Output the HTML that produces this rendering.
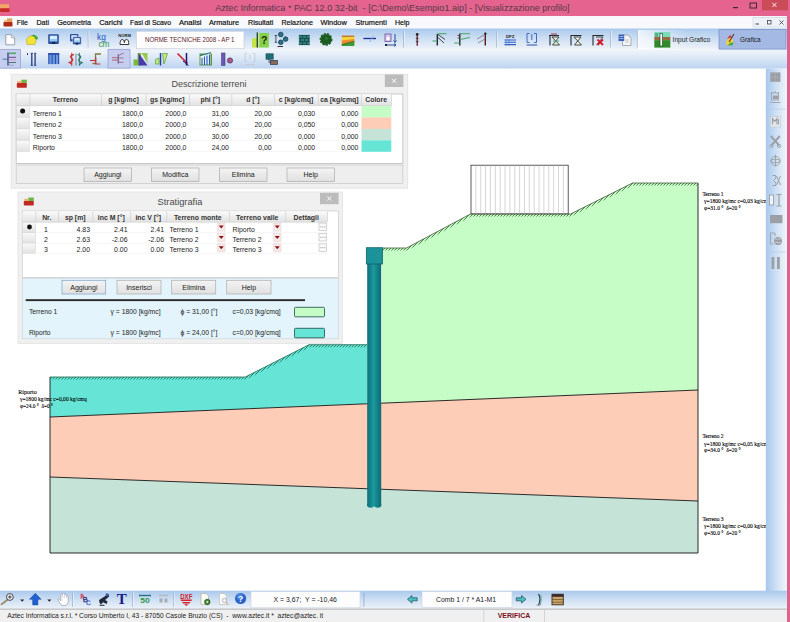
<!DOCTYPE html><html><head><meta charset="utf-8"><title>Aztec Informatica * PAC 12.0</title>
<style>html,body{margin:0;padding:0;background:#fff;overflow:hidden}svg{display:block}text{font-family:"Liberation Sans", sans-serif}.s{font-family:"Liberation Serif", serif}</style></head><body>
<svg width="790" height="622" viewBox="0 0 790 622">
<defs>
<linearGradient id="tb" x1="0" y1="0" x2="0" y2="1"><stop offset="0" stop-color="#a9c9ec"/><stop offset="0.5" stop-color="#cfe0f3"/><stop offset="1" stop-color="#eef3fa"/></linearGradient>
<linearGradient id="tb2" x1="0" y1="0" x2="0" y2="1"><stop offset="0" stop-color="#f1f5fb"/><stop offset="0.45" stop-color="#dce8f7"/><stop offset="1" stop-color="#bcd3f0"/></linearGradient>
<linearGradient id="rb" x1="0" y1="0" x2="1" y2="0"><stop offset="0" stop-color="#a6c8ec"/><stop offset="0.5" stop-color="#cfe0f4"/><stop offset="1" stop-color="#f1f5fb"/></linearGradient>
<linearGradient id="pile" x1="0" y1="0" x2="1" y2="0"><stop offset="0" stop-color="#0d6e76"/><stop offset="0.45" stop-color="#1a9aa0"/><stop offset="1" stop-color="#0c6a72"/></linearGradient>
<pattern id="h1" width="3" height="3" patternUnits="userSpaceOnUse"><path d="M-0.5 3.5L3.5 -0.5M-1.5 1.5L1.5 -1.5M1.5 4.5L4.5 1.5" stroke="#1f6a50" stroke-width="0.8"/></pattern>
<pattern id="h2" width="3" height="3" patternUnits="userSpaceOnUse"><path d="M-0.5 3.5L3.5 -0.5M-1.5 1.5L1.5 -1.5M1.5 4.5L4.5 1.5" stroke="#3f5f3a" stroke-width="0.8"/></pattern>
<linearGradient id="hdr" x1="0" y1="0" x2="0" y2="1"><stop offset="0" stop-color="#fafafa"/><stop offset="1" stop-color="#e2e2e2"/></linearGradient>
<linearGradient id="btn" x1="0" y1="0" x2="0" y2="1"><stop offset="0" stop-color="#f4f4f4"/><stop offset="1" stop-color="#e0e0e0"/></linearGradient>
</defs>
<rect width="790" height="622" fill="#fff"/>
<rect x="0" y="0" width="790" height="16.2" fill="#e5648f"/>
<rect x="786.8" y="16" width="3.2" height="606" fill="#da648c"/>
<rect x="762" y="0" width="26" height="10.3" fill="#cb4c58"/>
<text x="215.2" y="11" font-size="9.6" fill="#553a48" textLength="354.4" lengthAdjust="spacingAndGlyphs" xml:space="preserve">Aztec Informatica * PAC 12.0 32-bit  - [C:\Demo\Esempio1.aip] - [Visualizzazione profilo]</text>
<rect x="733" y="7" width="5" height="1.2" fill="#3a2a33"/>
<rect x="750" y="3" width="6.5" height="5" fill="none" stroke="#3a2a33" stroke-width="1"/>
<path d="M772.3 2.8l4.2 4.2m0 -4.2l-4.2 4.2" stroke="#fff" stroke-width="0.9" fill="none"/>
<rect x="0" y="4.2" width="9" height="4.400" fill="#f0a868"/><rect x="0" y="8.2" width="9.600" height="3.700" rx="0.800" fill="#c82a2a"/>
<rect x="0" y="16.2" width="786.8" height="12.3" fill="#f8f9fc"/>
<rect x="7" y="18.400" width="5.200" height="4" fill="#e0a060"/><rect x="3.800" y="20" width="3.600" height="2.500" fill="#f0c080"/><rect x="3.500" y="22" width="9" height="4.500" rx="0.800" fill="#b02a18"/>
<text x="16.7" y="25.3" font-size="7.7" fill="#0a0a0a" stroke="#0a0a0a" stroke-width="0.18" textLength="11.1" lengthAdjust="spacingAndGlyphs">File</text>
<text x="36.5" y="25.3" font-size="7.7" fill="#0a0a0a" stroke="#0a0a0a" stroke-width="0.18" textLength="12.5" lengthAdjust="spacingAndGlyphs">Dati</text>
<text x="57.2" y="25.3" font-size="7.7" fill="#0a0a0a" stroke="#0a0a0a" stroke-width="0.18" textLength="33.8" lengthAdjust="spacingAndGlyphs">Geometria</text>
<text x="99.2" y="25.3" font-size="7.7" fill="#0a0a0a" stroke="#0a0a0a" stroke-width="0.18" textLength="23.3" lengthAdjust="spacingAndGlyphs">Carichi</text>
<text x="130" y="25.3" font-size="7.7" fill="#0a0a0a" stroke="#0a0a0a" stroke-width="0.18" textLength="41" lengthAdjust="spacingAndGlyphs">Fasi di Scavo</text>
<text x="179" y="25.3" font-size="7.7" fill="#0a0a0a" stroke="#0a0a0a" stroke-width="0.18" textLength="22.5" lengthAdjust="spacingAndGlyphs">Analisi</text>
<text x="209" y="25.3" font-size="7.7" fill="#0a0a0a" stroke="#0a0a0a" stroke-width="0.18" textLength="30" lengthAdjust="spacingAndGlyphs">Armature</text>
<text x="248" y="25.3" font-size="7.7" fill="#0a0a0a" stroke="#0a0a0a" stroke-width="0.18" textLength="25.4" lengthAdjust="spacingAndGlyphs">Risultati</text>
<text x="281.5" y="25.3" font-size="7.7" fill="#0a0a0a" stroke="#0a0a0a" stroke-width="0.18" textLength="31.5" lengthAdjust="spacingAndGlyphs">Relazione</text>
<text x="320.5" y="25.3" font-size="7.7" fill="#0a0a0a" stroke="#0a0a0a" stroke-width="0.18" textLength="26.3" lengthAdjust="spacingAndGlyphs">Window</text>
<text x="355.4" y="25.3" font-size="7.7" fill="#0a0a0a" stroke="#0a0a0a" stroke-width="0.18" textLength="31.4" lengthAdjust="spacingAndGlyphs">Strumenti</text>
<text x="395" y="25.3" font-size="7.7" fill="#0a0a0a" stroke="#0a0a0a" stroke-width="0.18" textLength="14.5" lengthAdjust="spacingAndGlyphs">Help</text>
<rect x="753" y="17.5" width="33" height="9.5" fill="#eef2f8" stroke="#c8d2e0" stroke-width="0.6"/>
<rect x="755.5" y="23.5" width="3.5" height="1" fill="#445"/>
<rect x="767.5" y="20.5" width="3.5" height="3.5" fill="none" stroke="#445" stroke-width="0.8"/>
<path d="M779.5 20.5l4 4m0 -4l-4 4" stroke="#445" stroke-width="0.9" fill="none"/>
<rect x="0" y="28.5" width="786.8" height="21" fill="url(#tb)"/>
<rect x="0" y="49.5" width="786.8" height="19" fill="url(#tb2)"/>
<rect x="0" y="68.3" width="786.8" height="0.6" fill="#dfe9f5"/>
<rect x="765.8" y="68.6" width="21" height="522.4" fill="url(#rb)"/>
<rect x="0" y="590.7" width="786.8" height="18.3" fill="url(#tb)"/>
<rect x="0" y="609" width="786.8" height="13" fill="#f0f0f0"/>
<rect x="0" y="608.7" width="786.8" height="0.8" fill="#a0a0a0"/>
<text x="7.2" y="618.4" font-size="7.5" fill="#222" textLength="316" lengthAdjust="spacingAndGlyphs" xml:space="preserve">Aztec Informatica s.r.l. * Corso Umberto I, 43 - 87050 Casole Bruzio (CS)  -  www.aztec.it *  aztec@aztec. it</text>
<rect x="483.5" y="610" width="0.7" height="12" fill="#c8c8c8"/><rect x="544" y="610" width="0.7" height="12" fill="#c8c8c8"/>
<text x="514" y="618.2" font-size="7" font-weight="bold" fill="#7a1020" text-anchor="middle">VERIFICA</text>
<g stroke="#151515" stroke-width="0.9" stroke-linejoin="round">
<polygon points="382,248 406.5,248 470.5,214 570.5,214 632.5,183 698,183 698,390 382,403.167" fill="#c6fcc6" stroke="none"/>
<polygon points="50,377 245.3,377 309,344.7 367,344.7 367,403.792 50,417" fill="#66e5d6" stroke="none"/>
<polygon points="50,417 698,390 698,501 50,477" fill="#fdcdb8" stroke="none"/>
<polygon points="50,477 698,501 698,553 50,553" fill="#c6e3d7" stroke="none"/>
<path d="M50 377V553H698V183" fill="none"/>
<path d="M50 417 L698 390 M50 477 L698 501" fill="none"/>
</g>
<path d="M50 377H245.3L309 344.7H367" fill="none" stroke="#1f6a50" stroke-width="0.8"/>
<path d="M50 377H245.3L309 344.7H367V347.2H309.6L245.9 379.5H50z" fill="url(#h1)"/>
<path d="M382 248H406.5L470.5 214H570.5L632.5 183H698" fill="none" stroke="#3f5f3a" stroke-width="0.8"/>
<path d="M382 248H406.5L470.5 214H570.5L632.5 183H698V185.500H633.100L571.100 216.500H471.100L407.100 250.500H382z" fill="url(#h2)"/>
<rect x="367.2" y="262" width="14" height="243.700" fill="url(#pile)"/>
<path d="M367.200 503.700v2.500q3.500 3 7 0q3.500 3 7 0v-2.500z" fill="url(#pile)"/>
<rect x="366.3" y="247.7" width="16.2" height="16.3" fill="#1c9299" stroke="#0a5a62" stroke-width="0.7"/>
<rect x="471" y="165.2" width="97.2" height="48.6" fill="#fff" stroke="#333" stroke-width="0.8"/>
<path d="M475.86 165.6V213.4M480.72 165.6V213.4M485.58 165.6V213.4M490.44 165.6V213.4M495.3 165.6V213.4M500.16 165.6V213.4M505.02 165.6V213.4M509.88 165.6V213.4M514.74 165.6V213.4M519.6 165.6V213.4M524.46 165.6V213.4M529.32 165.6V213.4M534.18 165.6V213.4M539.04 165.6V213.4M543.9 165.6V213.4M548.76 165.6V213.4M553.62 165.6V213.4M558.48 165.6V213.4M563.34 165.6V213.4" stroke="#c4c4c4" stroke-width="0.7" fill="none"/>
<clipPath id="cl"><rect x="0" y="68" width="765.8" height="523"/></clipPath><g clip-path="url(#cl)">
<text class="s" font-size="6.1" fill="#000" stroke="#000" stroke-width="0.12" lengthAdjust="spacingAndGlyphs" x="702.4" y="195.9" textLength="21.1">Terreno 1</text>
<text class="s" font-size="6.1" fill="#000" stroke="#000" stroke-width="0.12" lengthAdjust="spacingAndGlyphs" x="704.1" y="203" textLength="66.7">γ=1800 kg/mc c=0,03 kg/cmq</text>
<text class="s" font-size="6.1" fill="#000" stroke="#000" stroke-width="0.12" lengthAdjust="spacingAndGlyphs" x="704.1" y="209.8" textLength="36.7" xml:space="preserve">φ=31.0 °  δ=20 °</text>
<text class="s" font-size="6.1" fill="#000" stroke="#000" stroke-width="0.12" lengthAdjust="spacingAndGlyphs" x="702.4" y="438" textLength="21.1">Terreno 2</text>
<text class="s" font-size="6.1" fill="#000" stroke="#000" stroke-width="0.12" lengthAdjust="spacingAndGlyphs" x="704.1" y="445.5" textLength="66.7">γ=1800 kg/mc c=0,05 kg/cmq</text>
<text class="s" font-size="6.1" fill="#000" stroke="#000" stroke-width="0.12" lengthAdjust="spacingAndGlyphs" x="704.1" y="452.2" textLength="36.7" xml:space="preserve">φ=34.0 °  δ=20 °</text>
<text class="s" font-size="6.1" fill="#000" stroke="#000" stroke-width="0.12" lengthAdjust="spacingAndGlyphs" x="702.4" y="521" textLength="21.1">Terreno 3</text>
<text class="s" font-size="6.1" fill="#000" stroke="#000" stroke-width="0.12" lengthAdjust="spacingAndGlyphs" x="704.1" y="528" textLength="66.7">γ=1800 kg/mc c=0,00 kg/cmq</text>
<text class="s" font-size="6.1" fill="#000" stroke="#000" stroke-width="0.12" lengthAdjust="spacingAndGlyphs" x="704.1" y="535" textLength="36.7" xml:space="preserve">φ=30.0 °  δ=20 °</text>
<text class="s" font-size="6.1" fill="#000" stroke="#000" stroke-width="0.12" lengthAdjust="spacingAndGlyphs" x="18.3" y="393.6" textLength="18.4">Riporto</text>
<text class="s" font-size="6.1" fill="#000" stroke="#000" stroke-width="0.12" lengthAdjust="spacingAndGlyphs" x="20" y="401" textLength="66.7">γ=1800 kg/mc c=0,00 kg/cmq</text>
<text class="s" font-size="6.1" fill="#000" stroke="#000" stroke-width="0.12" lengthAdjust="spacingAndGlyphs" x="20" y="408" textLength="33" xml:space="preserve">φ=24.0 °  δ=0 °</text>
</g>
<rect x="11.2" y="74.2" width="396.5" height="114" fill="#f0f0f0" stroke="#e0e0e0" stroke-width="0.8"/>
<rect x="21.3" y="79.7" width="5.500" height="3.600" fill="#6ab84a"/><rect x="17.3" y="81" width="4.200" height="2.600" fill="#f0b070"/><rect x="16.8" y="83.1" width="10" height="4.700" rx="0.800" fill="#c02a22"/>
<text x="171.5" y="87.3" font-size="9.4" fill="#4a4a4a" textLength="75" lengthAdjust="spacingAndGlyphs">Descrizione terreni</text>
<rect x="384.8" y="74.5" width="18.6" height="12.5" fill="#bcbcbc"/>
<path d="M392.1 78.75l4 4m0 -4l-4 4" stroke="#fff" stroke-width="1" fill="none"/>
<rect x="16.2" y="94" width="386.6" height="69.5" fill="#fff" stroke="#c4c4c4" stroke-width="0.9"/>
<rect x="16.5" y="94.3" width="374.8" height="11.2" fill="url(#hdr)"/>
<rect x="29.5" y="94.3" width="0.7" height="11.2" fill="#cfcfcf"/>
<rect x="101.2" y="94.3" width="0.7" height="11.2" fill="#cfcfcf"/>
<rect x="145.7" y="94.3" width="0.7" height="11.2" fill="#cfcfcf"/>
<rect x="189" y="94.3" width="0.7" height="11.2" fill="#cfcfcf"/>
<rect x="231.5" y="94.3" width="0.7" height="11.2" fill="#cfcfcf"/>
<rect x="274.3" y="94.3" width="0.7" height="11.2" fill="#cfcfcf"/>
<rect x="317.8" y="94.3" width="0.7" height="11.2" fill="#cfcfcf"/>
<rect x="361" y="94.3" width="0.7" height="11.2" fill="#cfcfcf"/>
<rect x="391.3" y="94.3" width="0.7" height="11.2" fill="#cfcfcf"/>
<rect x="16.5" y="105.3" width="374.8" height="0.7" fill="#cfcfcf"/>
<text x="65.35" y="102.2" font-size="6.9" font-weight="bold" text-anchor="middle" fill="#333">Terreno</text>
<text x="123.45" y="102.2" font-size="6.9" font-weight="bold" text-anchor="middle" fill="#333">g [kg/mc]</text>
<text x="167.35" y="102.2" font-size="6.9" font-weight="bold" text-anchor="middle" fill="#333">gs [kg/mc]</text>
<text x="210.25" y="102.2" font-size="6.9" font-weight="bold" text-anchor="middle" fill="#333">phi [°]</text>
<text x="252.9" y="102.2" font-size="6.9" font-weight="bold" text-anchor="middle" fill="#333">d [°]</text>
<text x="296.05" y="102.2" font-size="6.9" font-weight="bold" text-anchor="middle" fill="#333">c [kg/cmq]</text>
<text x="339.4" y="102.2" font-size="6.9" font-weight="bold" text-anchor="middle" fill="#333">ca [kg/cmq]</text>
<text x="376.15" y="102.2" font-size="6.9" font-weight="bold" text-anchor="middle" fill="#333">Colore</text>
<rect x="16.5" y="106" width="13" height="11.2" fill="url(#hdr)" stroke="#d4d4d4" stroke-width="0.5"/>
<rect x="29.5" y="117.3" width="331.5" height="0.5" fill="#ececec"/>
<text x="32.7" y="115.9" font-size="6.9" fill="#222">Terreno 1</text>
<text x="143.1" y="115.9" font-size="6.9" text-anchor="end" fill="#222">1800,0</text>
<text x="186.4" y="115.9" font-size="6.9" text-anchor="end" fill="#222">2000,0</text>
<text x="228.9" y="115.9" font-size="6.9" text-anchor="end" fill="#222">31,00</text>
<text x="271.7" y="115.9" font-size="6.9" text-anchor="end" fill="#222">20,00</text>
<text x="315.2" y="115.9" font-size="6.9" text-anchor="end" fill="#222">0,030</text>
<text x="358.4" y="115.9" font-size="6.9" text-anchor="end" fill="#222">0,000</text>
<rect x="361.5" y="106" width="29.8" height="11.5" fill="#c6fcc6"/>
<rect x="16.5" y="117.43" width="13" height="11.2" fill="url(#hdr)" stroke="#d4d4d4" stroke-width="0.5"/>
<rect x="29.5" y="128.73" width="331.5" height="0.5" fill="#ececec"/>
<text x="32.7" y="127.33" font-size="6.9" fill="#222">Terreno 2</text>
<text x="143.1" y="127.33" font-size="6.9" text-anchor="end" fill="#222">1800,0</text>
<text x="186.4" y="127.33" font-size="6.9" text-anchor="end" fill="#222">2000,0</text>
<text x="228.9" y="127.33" font-size="6.9" text-anchor="end" fill="#222">34,00</text>
<text x="271.7" y="127.33" font-size="6.9" text-anchor="end" fill="#222">20,00</text>
<text x="315.2" y="127.33" font-size="6.9" text-anchor="end" fill="#222">0,050</text>
<text x="358.4" y="127.33" font-size="6.9" text-anchor="end" fill="#222">0,000</text>
<rect x="361.5" y="117.43" width="29.8" height="11.5" fill="#fdcdb8"/>
<rect x="16.5" y="128.86" width="13" height="11.2" fill="url(#hdr)" stroke="#d4d4d4" stroke-width="0.5"/>
<rect x="29.5" y="140.16" width="331.5" height="0.5" fill="#ececec"/>
<text x="32.7" y="138.76" font-size="6.9" fill="#222">Terreno 3</text>
<text x="143.1" y="138.76" font-size="6.9" text-anchor="end" fill="#222">1800,0</text>
<text x="186.4" y="138.76" font-size="6.9" text-anchor="end" fill="#222">2000,0</text>
<text x="228.9" y="138.76" font-size="6.9" text-anchor="end" fill="#222">30,00</text>
<text x="271.7" y="138.76" font-size="6.9" text-anchor="end" fill="#222">20,00</text>
<text x="315.2" y="138.76" font-size="6.9" text-anchor="end" fill="#222">0,000</text>
<text x="358.4" y="138.76" font-size="6.9" text-anchor="end" fill="#222">0,000</text>
<rect x="361.5" y="128.86" width="29.8" height="11.5" fill="#c6e3d7"/>
<rect x="16.5" y="140.29" width="13" height="11.2" fill="url(#hdr)" stroke="#d4d4d4" stroke-width="0.5"/>
<rect x="29.5" y="151.59" width="331.5" height="0.5" fill="#ececec"/>
<text x="32.7" y="150.19" font-size="6.9" fill="#222">Riporto</text>
<text x="143.1" y="150.19" font-size="6.9" text-anchor="end" fill="#222">1800,0</text>
<text x="186.4" y="150.19" font-size="6.9" text-anchor="end" fill="#222">2000,0</text>
<text x="228.9" y="150.19" font-size="6.9" text-anchor="end" fill="#222">24,00</text>
<text x="271.7" y="150.19" font-size="6.9" text-anchor="end" fill="#222">0,00</text>
<text x="315.2" y="150.19" font-size="6.9" text-anchor="end" fill="#222">0,000</text>
<text x="358.4" y="150.19" font-size="6.9" text-anchor="end" fill="#222">0,000</text>
<rect x="361.5" y="140.29" width="29.8" height="11.5" fill="#66e5d6"/>
<circle cx="22.6" cy="110.9" r="2.5" fill="#111"/>
<rect x="16.2" y="165" width="386.6" height="18.5" fill="#eeeeee" stroke="#cccccc" stroke-width="0.8"/>
<rect x="84" y="168" width="47.5" height="13.5" fill="url(#btn)" stroke="#acacac" stroke-width="0.7"/>
<text x="107.75" y="177.35" font-size="7" text-anchor="middle" fill="#222">Aggiungi</text>
<rect x="151.5" y="168" width="47.5" height="13.5" fill="url(#btn)" stroke="#acacac" stroke-width="0.7"/>
<text x="175.25" y="177.35" font-size="7" text-anchor="middle" fill="#222">Modifica</text>
<rect x="219.5" y="168" width="47.5" height="13.5" fill="url(#btn)" stroke="#acacac" stroke-width="0.7"/>
<text x="243.25" y="177.35" font-size="7" text-anchor="middle" fill="#222">Elimina</text>
<rect x="287" y="168" width="47.5" height="13.5" fill="url(#btn)" stroke="#acacac" stroke-width="0.7"/>
<text x="310.75" y="177.35" font-size="7" text-anchor="middle" fill="#222">Help</text>
<rect x="18" y="192" width="324.5" height="151.5" fill="#f0f0f0" stroke="#e2e2e2" stroke-width="0.8"/>
<rect x="28.3" y="197.5" width="5.500" height="3.600" fill="#6ab84a"/><rect x="24.3" y="198.8" width="4.200" height="2.600" fill="#f0b070"/><rect x="23.8" y="200.9" width="10" height="4.700" rx="0.800" fill="#c02a22"/>
<text x="157.6" y="205.2" font-size="9.4" fill="#4a4a4a" textLength="44.8" lengthAdjust="spacingAndGlyphs">Stratigrafia</text>
<rect x="320" y="192.8" width="18.6" height="11.4" fill="#bcbcbc"/>
<path d="M327.3 196.5l4 4m0 -4l-4 4" stroke="#fff" stroke-width="1" fill="none"/>
<rect x="22.3" y="211" width="316" height="66.5" fill="#fff" stroke="#c9c9c9" stroke-width="0.7"/>
<rect x="22.6" y="211.3" width="304.4" height="10.7" fill="url(#hdr)"/>
<rect x="35.5" y="211.3" width="0.7" height="10.7" fill="#cfcfcf"/>
<rect x="58" y="211.3" width="0.7" height="10.7" fill="#cfcfcf"/>
<rect x="92.5" y="211.3" width="0.7" height="10.7" fill="#cfcfcf"/>
<rect x="130" y="211.3" width="0.7" height="10.7" fill="#cfcfcf"/>
<rect x="166.5" y="211.3" width="0.7" height="10.7" fill="#cfcfcf"/>
<rect x="229" y="211.3" width="0.7" height="10.7" fill="#cfcfcf"/>
<rect x="285.4" y="211.3" width="0.7" height="10.7" fill="#cfcfcf"/>
<rect x="327" y="211.3" width="0.7" height="10.7" fill="#cfcfcf"/>
<rect x="22.6" y="221.8" width="304.4" height="0.7" fill="#cfcfcf"/>
<text x="46.75" y="219.9" font-size="6.9" font-weight="bold" text-anchor="middle" fill="#333">Nr.</text>
<text x="75.25" y="219.9" font-size="6.9" font-weight="bold" text-anchor="middle" fill="#333">sp [m]</text>
<text x="111.25" y="219.9" font-size="6.9" font-weight="bold" text-anchor="middle" fill="#333">inc M [°]</text>
<text x="148.25" y="219.9" font-size="6.9" font-weight="bold" text-anchor="middle" fill="#333">inc V [°]</text>
<text x="197.75" y="219.9" font-size="6.9" font-weight="bold" text-anchor="middle" fill="#333">Terreno monte</text>
<text x="257.2" y="219.9" font-size="6.9" font-weight="bold" text-anchor="middle" fill="#333">Terreno valle</text>
<text x="306.2" y="219.9" font-size="6.9" font-weight="bold" text-anchor="middle" fill="#333">Dettagli</text>
<rect x="22.6" y="222.3" width="12.9" height="10.2" fill="url(#hdr)" stroke="#d4d4d4" stroke-width="0.5"/>
<rect x="35.5" y="232.5" width="291.5" height="0.5" fill="#ececec"/>
<text x="46" y="231.5" font-size="6.9" text-anchor="middle" fill="#222">1</text>
<text x="90" y="231.5" font-size="6.9" text-anchor="end" fill="#222">4.83</text>
<text x="127.5" y="231.5" font-size="6.9" text-anchor="end" fill="#222">2.41</text>
<text x="164" y="231.5" font-size="6.9" text-anchor="end" fill="#222">2.41</text>
<text x="169.5" y="231.5" font-size="6.9" fill="#222">Terreno 1</text>
<text x="232.5" y="231.5" font-size="6.9" fill="#222">Riporto</text>
<rect x="217.5" y="223.1" width="7.5" height="8" fill="#f6e8e8" stroke="#e6d2d2" stroke-width="0.5"/>
<path d="M218.75 225.5h5l-2.5 3z" fill="#8b1010"/>
<rect x="273.5" y="223.1" width="7.5" height="8" fill="#f6e8e8" stroke="#e6d2d2" stroke-width="0.5"/>
<path d="M274.75 225.5h5l-2.5 3z" fill="#8b1010"/>
<rect x="319" y="223.1" width="7.5" height="7.5" fill="#fafafa" stroke="#b8b8b8" stroke-width="0.6"/>
<path d="M320.3 226.9h1m1 0h1m1 0h1" stroke="#888" stroke-width="0.8"/>
<rect x="22.6" y="232.7" width="12.9" height="10.2" fill="url(#hdr)" stroke="#d4d4d4" stroke-width="0.5"/>
<rect x="35.5" y="242.9" width="291.5" height="0.5" fill="#ececec"/>
<text x="46" y="241.9" font-size="6.9" text-anchor="middle" fill="#222">2</text>
<text x="90" y="241.9" font-size="6.9" text-anchor="end" fill="#222">2.63</text>
<text x="127.5" y="241.9" font-size="6.9" text-anchor="end" fill="#222">-2.06</text>
<text x="164" y="241.9" font-size="6.9" text-anchor="end" fill="#222">-2.06</text>
<text x="169.5" y="241.9" font-size="6.9" fill="#222">Terreno 2</text>
<text x="232.5" y="241.9" font-size="6.9" fill="#222">Terreno 2</text>
<rect x="217.5" y="233.5" width="7.5" height="8" fill="#f6e8e8" stroke="#e6d2d2" stroke-width="0.5"/>
<path d="M218.75 235.9h5l-2.5 3z" fill="#8b1010"/>
<rect x="273.5" y="233.5" width="7.5" height="8" fill="#f6e8e8" stroke="#e6d2d2" stroke-width="0.5"/>
<path d="M274.75 235.9h5l-2.5 3z" fill="#8b1010"/>
<rect x="319" y="233.5" width="7.5" height="7.5" fill="#fafafa" stroke="#b8b8b8" stroke-width="0.6"/>
<path d="M320.3 237.3h1m1 0h1m1 0h1" stroke="#888" stroke-width="0.8"/>
<rect x="22.6" y="243.1" width="12.9" height="10.2" fill="url(#hdr)" stroke="#d4d4d4" stroke-width="0.5"/>
<rect x="35.5" y="253.3" width="291.5" height="0.5" fill="#ececec"/>
<text x="46" y="252.3" font-size="6.9" text-anchor="middle" fill="#222">3</text>
<text x="90" y="252.3" font-size="6.9" text-anchor="end" fill="#222">2.00</text>
<text x="127.5" y="252.3" font-size="6.9" text-anchor="end" fill="#222">0.00</text>
<text x="164" y="252.3" font-size="6.9" text-anchor="end" fill="#222">0.00</text>
<text x="169.5" y="252.3" font-size="6.9" fill="#222">Terreno 3</text>
<text x="232.5" y="252.3" font-size="6.9" fill="#222">Terreno 3</text>
<rect x="217.5" y="243.9" width="7.5" height="8" fill="#f6e8e8" stroke="#e6d2d2" stroke-width="0.5"/>
<path d="M218.75 246.3h5l-2.5 3z" fill="#8b1010"/>
<rect x="273.5" y="243.9" width="7.5" height="8" fill="#f6e8e8" stroke="#e6d2d2" stroke-width="0.5"/>
<path d="M274.75 246.3h5l-2.5 3z" fill="#8b1010"/>
<rect x="319" y="243.9" width="7.5" height="7.5" fill="#fafafa" stroke="#b8b8b8" stroke-width="0.6"/>
<path d="M320.3 247.7h1m1 0h1m1 0h1" stroke="#888" stroke-width="0.8"/>
<circle cx="29.500" cy="227" r="2.400" fill="#111"/>
<rect x="22.3" y="278.3" width="316" height="60.5" fill="#e3f4fc" stroke="#c9d5dc" stroke-width="0.7"/>
<rect x="62" y="280.3" width="43.7" height="13.7" fill="url(#btn)" stroke="#7da2ce" stroke-width="0.7"/>
<text x="83.85" y="289.75" font-size="7" text-anchor="middle" fill="#222">Aggiungi</text>
<rect x="117" y="280.3" width="44" height="13.7" fill="url(#btn)" stroke="#acacac" stroke-width="0.7"/>
<text x="139" y="289.75" font-size="7" text-anchor="middle" fill="#222">Inserisci</text>
<rect x="171.7" y="280.3" width="44" height="13.7" fill="url(#btn)" stroke="#acacac" stroke-width="0.7"/>
<text x="193.7" y="289.75" font-size="7" text-anchor="middle" fill="#222">Elimina</text>
<rect x="226.7" y="280.3" width="44.3" height="13.7" fill="url(#btn)" stroke="#acacac" stroke-width="0.7"/>
<text x="248.85" y="289.75" font-size="7" text-anchor="middle" fill="#222">Help</text>
<rect x="25.7" y="299.2" width="279.3" height="1.9" fill="#2a2a2a"/>
<text x="29" y="313.5" font-size="6.7" fill="#222">Terreno 1</text>
<text x="110.5" y="313.5" font-size="6.8" fill="#222">γ = 1800 [kg/mc]</text>
<text x="180.5" y="313.5" font-size="6.8" fill="#222">ϕ = 31,00 [°]</text>
<text x="232.5" y="313.5" font-size="6.8" fill="#222">c=0,03 [kg/cmq]</text>
<rect x="294.5" y="307.3" width="30" height="9.5" rx="1" fill="#c6fcc6" stroke="#1a4a44" stroke-width="0.8"/>
<text x="29" y="334.5" font-size="6.7" fill="#222">Riporto</text>
<text x="110.5" y="334.5" font-size="6.8" fill="#222">γ = 1800 [kg/mc]</text>
<text x="180.5" y="334.5" font-size="6.8" fill="#222">ϕ = 24,00 [°]</text>
<text x="232.5" y="334.5" font-size="6.8" fill="#222">c=0,00 [kg/cmq]</text>
<rect x="294.5" y="328.3" width="30" height="9.5" rx="1" fill="#66e5d6" stroke="#1a4a44" stroke-width="0.8"/>
<rect x="136.3" y="31.2" width="107.7" height="17.6" fill="#fdfdfe" stroke="#c5cbd9" stroke-width="0.7"/>
<text x="145" y="42" font-size="6.9" fill="#5e1a2a" textLength="89.5" lengthAdjust="spacingAndGlyphs">NORME TECNICHE 2008 - AP 1</text>
<rect x="87.8" y="31" width="0.8" height="16.5" fill="#8fa7c6"/><rect x="88.6" y="31" width="0.7" height="16.5" fill="#f4f8fd"/>
<rect x="403.4" y="31" width="0.8" height="16.5" fill="#8fa7c6"/><rect x="404.2" y="31" width="0.7" height="16.5" fill="#f4f8fd"/>
<rect x="496" y="31" width="0.8" height="16.5" fill="#8fa7c6"/><rect x="496.8" y="31" width="0.7" height="16.5" fill="#f4f8fd"/>
<rect x="610" y="31" width="0.8" height="16.5" fill="#8fa7c6"/><rect x="610.8" y="31" width="0.7" height="16.5" fill="#f4f8fd"/>
<rect x="636.9" y="31" width="0.8" height="16.5" fill="#8fa7c6"/><rect x="637.7" y="31" width="0.7" height="16.5" fill="#f4f8fd"/>
<path d="M5.8 34.7h5.6l3.3 3.2v6.9h-8.9z" fill="#fdfdfd" stroke="#8a8f98" stroke-width="0.8"/><path d="M11.4 34.7v3.2h3.3" fill="#e8e8ea" stroke="#8a8f98" stroke-width="0.6"/>
<path d="M26.5 39.5l3-3.5h5l2 2.5-1.5 6h-8z" fill="#f3e23a" stroke="#b7a51a" stroke-width="0.6"/><path d="M31 35.5q4-2 6 1.5l1-.5-.7 3.2-3-1.2 1-.6q-1.5-2-4.3-2.4z" fill="#3aa53a"/>
<rect x="48.200" y="34.200" width="10.600" height="9.800" rx="1" fill="#2a4f9e"/><rect x="49.800" y="35.700" width="7.400" height="5.600" fill="#d8ecfb"/><rect x="49.800" y="39" width="7.400" height="2.300" fill="#8ec8f0"/><rect x="52" y="41.800" width="3.200" height="2.200" fill="#16264f"/>
<rect x="70" y="34" width="8.300" height="7.600" rx="1" fill="#2a4f9e"/><rect x="71.300" y="35.200" width="5.700" height="4" fill="#d8ecfb"/>
<rect x="72.800" y="36.800" width="8.400" height="7.800" rx="1" fill="#2a4f9e" stroke="#dfe9f5" stroke-width="0.500"/><rect x="74.200" y="38.100" width="5.600" height="4.200" fill="#d8ecfb"/><rect x="74.200" y="40.500" width="5.600" height="1.800" fill="#8ec8f0"/><rect x="75.800" y="42.800" width="2.400" height="1.800" fill="#16264f"/>
<text x="101.400" y="39.900" font-size="8.400" text-anchor="middle" fill="#2050c0">kg</text><text x="104" y="46.700" font-size="8.400" text-anchor="middle" fill="#2f9a4a">cm</text>
<text x="124.6" y="36.6" font-size="4.2" font-weight="bold" text-anchor="middle" fill="#222">NORM</text>
<path d="M120 44.5q0-5 2.2-5t2.2 3.2q0-3.2 2.2-3.2t2.2 5z" fill="#fff" stroke="#222" stroke-width="0.9"/>
<rect x="252" y="38.200" width="5.500" height="9.300" fill="#c4e444"/><rect x="258.500" y="32.900" width="10.300" height="14.600" fill="#84d24a"/><rect x="256.600" y="32.400" width="1.700" height="15.100" fill="#2a4a3a"/><rect x="258.300" y="32.400" width="0.900" height="15.100" fill="#eef6c8"/>
<text x="264.200" y="44.300" font-size="10.500" font-weight="bold" text-anchor="middle" fill="#26260f">?</text>
<path d="M274.600 35.500h2.600m-1.300 0v6.800m-1.300 0h2.600" stroke="#445" stroke-width="0.900" fill="none"/><circle cx="280.800" cy="34.500" r="2.300" fill="#2a7088" stroke="#163e4e" stroke-width="0.800"/><circle cx="285.600" cy="39.100" r="2.300" fill="#2a7088" stroke="#163e4e" stroke-width="0.800"/><circle cx="280.800" cy="42.300" r="2.300" fill="#2a7088" stroke="#163e4e" stroke-width="0.800"/><rect x="277.500" y="46" width="5.500" height="1" fill="#334"/>
<rect x="298.900" y="35.100" width="10.800" height="9.800" fill="#2f8078"/><path d="M298.900 35.400h10.800M298.900 38.400h10.800M298.900 41.600h10.800M298.900 44.600h10.800M302.500 35.100v3.300M306.500 35.100v3.300M300.500 38.400v3.200M304.500 38.400v3.200M308.500 38.400v3.200M302.500 41.600v3.300M306.500 41.600v3.300" stroke="#164a4c" stroke-width="0.900"/>
<circle cx="326" cy="39.400" r="5.500" fill="#1c5c22"/><circle cx="326" cy="39.400" r="5.700" fill="none" stroke="#1c5c22" stroke-width="1.400" stroke-dasharray="2.200 1.200"/><circle cx="326.500" cy="38.500" r="1.200" fill="#2f7a34"/>
<rect x="341.800" y="35.800" width="12.500" height="10.200" fill="#f4d43a"/><path d="M341.800 36.200h12.500" stroke="#a04028" stroke-width="0.900"/><path d="M341.800 40.500l12.500-1.500v4l-12.500 2.500z" fill="#ee8a30"/><path d="M341.800 44.600l12.500-3.400v4.800h-12.500z" fill="#3f9a3a"/><path d="M341.800 44.600l12.500-3.400" stroke="#1f5a20" stroke-width="0.600"/>
<path d="M363.400 38.500h12.600" stroke="#1a2a98" stroke-width="1.300"/><path d="M369.700 42l3.800-6.500" stroke="#8ab8ea" stroke-width="1"/>
<rect x="385" y="34" width="6" height="7.5" fill="#d7c8ea" stroke="#6a4aa0" stroke-width="0.8"/><rect x="386.6" y="37" width="2.8" height="3" fill="#fff"/><path d="M395 34v8m-1.5-1.5l1.5 2 1.5-2M385.5 45h10m-1.5-1.5l2 1.5-2 1.5" stroke="#1a3a8a" stroke-width="0.9" fill="none"/><rect x="385" y="44" width="2" height="2" fill="#223"/>
<path d="M417.2 34v11.7" stroke="#6a1a20" stroke-width="1.3"/><circle cx="417.2" cy="34.2" r="1.3" fill="#222"/><path d="M415.8 38.5h2.8M415.8 41.5h2.8" stroke="#222" stroke-width="0.6"/>
<path d="M437.3 34v11.5" stroke="#2a2a2a" stroke-width="1.4"/><path d="M437.5 33.7h9" stroke="#4aa66a" stroke-width="1.1"/><path d="M432.5 41h4.5" stroke="#4aa66a" stroke-width="1.1"/><path d="M438 34.5l7 5M438 37.5l6 5.5" stroke="#333" stroke-width="0.9"/>
<path d="M459.8 33.5v12" stroke="#2a2a2a" stroke-width="1.4"/><path d="M460 33.8h10M460 39.5l10-2M454 43h5.5" stroke="#4aa66a" stroke-width="1.1"/><path d="M457.5 35.5h2M457.5 38h2" stroke="#6a2a2a" stroke-width="0.8"/>
<path d="M485.3 33.5v12" stroke="#5a1a20" stroke-width="1.4"/><circle cx="485.3" cy="33.6" r="1.2" fill="#222"/><path d="M477 39l8-4.5M478 43l7-4" stroke="#777" stroke-width="0.8"/>
<text x="510.2" y="38" font-size="4.4" font-weight="bold" text-anchor="middle" fill="#222">DFZ</text><path d="M504.5 40h11.5M504.5 42.3h11.5M504.5 44.6h11.5" stroke="#2a5ac8" stroke-width="1.1"/><path d="M506 39v6.5M509 39v6.5" stroke="#4a7ad8" stroke-width="0.6"/>
<path d="M529.5 33.5h-2.5v9h2.5M534 33.5h2.5v9h-2.5M531.8 34v6" stroke="#3a5ab8" stroke-width="0.9" fill="none"/><path d="M526.6 45h10.6" stroke="#3a5ab8" stroke-width="1.1"/>
<path d="M550 35v10.5M549 35.5h10" stroke="#2a2a2a" stroke-width="1.1"/><path d="M552 37h7l-6.5 8h7z" fill="#e8f0d8" stroke="#3a3a3a" stroke-width="0.9"/><path d="M551 34h6" stroke="#a02030" stroke-width="0.9"/><path d="M553 41h6" stroke="#4aa66a" stroke-width="0.9"/>
<path d="M571 35v10.5M570.5 35.5h11" stroke="#2a2a2a" stroke-width="1.1"/><path d="M574 37h7l-6.5 8h7z" fill="#f2f2e0" stroke="#3a3a3a" stroke-width="0.9"/>
<path d="M593 35v10.5M592.5 35.5h11" stroke="#2a2a2a" stroke-width="1.1"/><path d="M596 37h7l-6.5 8" fill="none" stroke="#3a3a3a" stroke-width="0.9"/><path d="M597.5 39.5l5.5 5.5m0-5.5l-5.5 5.5" stroke="#d81a2a" stroke-width="1.8"/>
<path d="M622.5 35h5.5l3 3v7.5h-8.5z" fill="#f4f4f6" stroke="#8a8f98" stroke-width="0.7"/><rect x="618.6" y="34.5" width="5.6" height="6.5" fill="#3a62b8"/><path d="M619.5 36.5h4M619.5 38.5h4" stroke="#dfe8fa" stroke-width="0.6"/><path d="M625 40h4M625 42h4" stroke="#aaa" stroke-width="0.6"/>
<linearGradient id="wl" x1="0" y1="0" x2="1" y2="0"><stop offset="0" stop-color="#fff" stop-opacity="0.75"/><stop offset="1" stop-color="#fff" stop-opacity="0"/></linearGradient><rect x="638" y="30" width="50" height="19.500" fill="url(#wl)"/>
<rect x="654.3" y="32" width="16" height="5.5" fill="#7adcb8"/><rect x="654.3" y="37" width="16" height="3.5" fill="#9a6a3a"/><rect x="654.3" y="40.2" width="16" height="7.4" fill="#2f8a2a"/><rect x="660" y="33.5" width="2.6" height="12.5" fill="#f4f4f4" stroke="#1a3a1a" stroke-width="0.6"/><path d="M655 34h3M655 36h3" stroke="#1a5a3a" stroke-width="0.7"/>
<text x="672.6" y="42" font-size="7.4" fill="#1a1a1a" textLength="37.6" lengthAdjust="spacingAndGlyphs">Input Grafico</text>
<rect x="719" y="29.6" width="67" height="19.5" fill="#a5b9e5" stroke="#7c92c8" stroke-width="0.8"/>
<path d="M726 44q0-5 4-6l3 2q1 5-3 6z" fill="#f2d23a"/><path d="M727 39l3-4 2 2z" fill="#d8303a"/><path d="M727.5 45.5h5l1-3h-3z" fill="#4aa84a"/><path d="M729 42l5-8" stroke="#5a3a2a" stroke-width="1.1"/>
<text x="740" y="42" font-size="7.4" fill="#1a1a1a" textLength="20.6" lengthAdjust="spacingAndGlyphs">Grafica</text>
<rect x="-1" y="49.300" width="21.400" height="18.800" fill="#c6cef0" stroke="#8f9cc8" stroke-width="0.700"/>
<rect x="108" y="49.300" width="22" height="18.800" fill="#c6cef0" stroke="#8f9cc8" stroke-width="0.700"/>
<path d="M2.700 59.200h5" stroke="#5a8aa8" stroke-width="1.200"/><path d="M8 52.400v13.200" stroke="#4a5a8a" stroke-width="1.600"/><path d="M8.800 53.300h7.200" stroke="#5aa86a" stroke-width="1.700"/><path d="M8.800 57.300h7.200" stroke="#6a4a8a" stroke-width="1"/><path d="M8.800 59.700h7.200" stroke="#d8a8d8" stroke-width="1.500"/><path d="M8.800 62.500h7.200" stroke="#4a7a6a" stroke-width="1"/><path d="M8.800 65.200h5" stroke="#8a9ac8" stroke-width="0.800"/>
<path d="M31.800 53.200v12.200M35.100 53.200v12.200" stroke="#2a3a80" stroke-width="1.300"/><path d="M30.600 53.300h2.400M33.900 53.300h2.400M30.600 65.300h2.400M33.900 65.300h2.400" stroke="#2a3a80" stroke-width="0.800"/><rect x="27" y="53.200" width="1" height="1.800" fill="#223"/>
<rect x="48.300" y="53.300" width="10.900" height="10.800" fill="#6a9ae0"/><path d="M48.300 53.900h10.900" stroke="#1a3a98" stroke-width="1.400"/><path d="M48.900 53.300v10.800M52.100 53.300v10.800M55.400 53.300v10.800M58.600 53.300v10.800" stroke="#2a4aa8" stroke-width="1"/>
<path d="M71.700 52.800v13" stroke="#c03030" stroke-width="0.900"/><path d="M74 54.500q-5.500 1.200-2.300 3.700t-2.500 4.300l3 1.800" fill="none" stroke="#c83030" stroke-width="1.300"/><path d="M76 53.500v12" stroke="#3a3a4a" stroke-width="0.600"/><path d="M79.400 52.800v13" stroke="#2a7a6a" stroke-width="0.900"/><path d="M77.500 54.500q5 1.500 2.200 4t2.300 4.200l-3 2" fill="none" stroke="#2a7a6a" stroke-width="1.300"/>
<path d="M90 60.5h6" stroke="#c03030" stroke-width="1.1"/><path d="M101 54h-5.5v9.5h-3" fill="none" stroke="#8a7a3a" stroke-width="1.3"/><path d="M95.8 57.5v6.5h4.5" fill="none" stroke="#c03040" stroke-width="1.1"/>
<path d="M118.200 54.300v9.200" stroke="#5a4a6a" stroke-width="1"/><path d="M112 57.700h6M112 60.100h6" stroke="#b04a5a" stroke-width="0.800"/><path d="M118.500 58h5M118.500 62.300h5" stroke="#8a5a7a" stroke-width="0.800"/><path d="M118.500 55.400l5.200-2.400" stroke="#a05a7a" stroke-width="0.800"/>
<path d="M133.6 59.5h4v-6.5h3.5v12.5h-7.5z" fill="#7ab83a"/><path d="M138.5 53l9 12.5h-9z" fill="#4a3aa8"/><path d="M141.5 53h6v10z" fill="#9ac84a"/>
<path d="M160.5 53v12.5" stroke="#2a3aa8" stroke-width="1.5"/><path d="M162.5 53.5h5l-3.5 10.5z" fill="#c8e88a" stroke="#5aa83a" stroke-width="0.8"/><path d="M155.5 59.5l3.5-1.5v6h-3.5z" fill="#c8e88a" stroke="#5aa83a" stroke-width="0.8"/>
<path d="M177.5 53.5l10 10" stroke="#d02030" stroke-width="1.6"/><path d="M186.5 53v12.5" stroke="#1a1a78" stroke-width="1.5"/><path d="M183 61l5.5 4.5" stroke="#1a1a78" stroke-width="1"/>
<path d="M199.5 53.5h12.5v12h-12.5z" fill="#5a9a3a"/><path d="M200.5 56l10-2.5v11h-10z" fill="#e8f4ff"/><path d="M202 65l0-7M204.5 65v-8.5M207 65v-9.5M209.5 65v-10.5" stroke="#2a5ab8" stroke-width="1.1"/><path d="M200 55.5l11-3" stroke="#2a7a8a" stroke-width="1"/>
<rect x="221.5" y="53" width="3.5" height="12.5" fill="#6a5ab0" stroke="#3a2a78" stroke-width="0.5"/><circle cx="230" cy="60.5" r="2.6" fill="#b05a7a" stroke="#5a3a88" stroke-width="0.9"/>
<path d="M247 53.5h-1.8v8.5h1.8M253 53.5h1.8v8.5h-1.8M250 54.5v5" stroke="#c4c9d2" stroke-width="0.9" fill="none"/><path d="M245 64.8h10" stroke="#c4c9d2" stroke-width="1"/>
<rect x="266" y="53.8" width="7.2" height="5.4" fill="#1f6f7a" stroke="#12424a" stroke-width="0.6"/><rect x="270.4" y="60.4" width="7" height="4" fill="#8a6a5a" stroke="#2a3a4a" stroke-width="0.7"/><path d="M269 59.2v3.2h1.4" stroke="#223" stroke-width="0.7" fill="none"/>
<g stroke="#9c9fa6" fill="none" stroke-width="0.9">
<rect x="770.2" y="72.4" width="10.2" height="9.4" fill="#9c9fa6" stroke="none"/><path d="M775.3 72.4v9.4M770.2 77.1h10.2" stroke="#b4b6bc" stroke-width="0.5"/>
<path d="M770.5 102.5h10M771.5 100v-8l2 2 1.5-2.5 1.5 2.5 2-2v8z"/><rect x="773" y="95.5" width="5" height="3.5" fill="#9c9fa6" stroke="none"/>
<path d="M767.5 109.2h18" stroke="#b9cde6" stroke-width="0.7"/>
<rect x="770.3" y="116.5" width="10.5" height="10.5" fill="#e4e8ee" stroke="#c4c8d0" stroke-width="0.6"/><path d="M772.5 124.5v-6l2.2 3 2.2-3v6M778.5 119v5.5" stroke-width="1.1"/>
<path d="M770.800 136l8.500 9.500M779.800 136l-8.500 9.500" stroke-width="1.900"/><circle cx="771.5" cy="146" r="1.6"/><circle cx="779" cy="146" r="1.6"/>
<circle cx="775.5" cy="161" r="4.6"/><ellipse cx="775.5" cy="161" rx="4.6" ry="1.8"/><path d="M775.5 154.5v12"/>
<path d="M772.5 175.5h3q2 2.5-2 5q4 2.5 2 5h-3M776.5 176l4 9M780.5 176l-4 9" stroke-width="1"/>
<rect x="769.5" y="195" width="4" height="10" fill="#f0f3f8"/><path d="M776.5 194.5h5M779 194.5v11.5M776.5 206h5" stroke-width="1.2"/>
<rect x="770" y="215" width="12.4" height="8.2" fill="#9c9fa6" stroke="none"/>
<path d="M770.5 233h4.5v3M770.5 233v11h3"/><circle cx="778" cy="241" r="4" fill="#9c9fa6" stroke="none"/><path d="M774.5 239h7M775 242.5h6" stroke="#e4e8ee" stroke-width="0.6"/>
<path d="M767.5 251.9h18" stroke="#b9cde6" stroke-width="0.7"/>
<rect x="771.5" y="257" width="2.8" height="12" fill="#9c9fa6" stroke="none"/><rect x="777" y="257" width="2.8" height="12" fill="#9c9fa6" stroke="none"/>
</g>
<rect x="72.4" y="592.5" width="0.8" height="14.5" fill="#8fa7c6"/><rect x="73.2" y="592.5" width="0.7" height="14.5" fill="#f4f8fd"/>
<rect x="132.4" y="592.5" width="0.8" height="14.5" fill="#8fa7c6"/><rect x="133.2" y="592.5" width="0.7" height="14.5" fill="#f4f8fd"/>
<rect x="173.5" y="592.5" width="0.8" height="14.5" fill="#8fa7c6"/><rect x="174.3" y="592.5" width="0.7" height="14.5" fill="#f4f8fd"/>
<path d="M7.5 599.8l-6 4.6" stroke="#9a8a6a" stroke-width="1.8" stroke-linecap="round"/><circle cx="9.9" cy="597" r="3.4" fill="#f4f8ff" stroke="#333" stroke-width="0.9"/><path d="M8 597h3.8M9.9 595.1v3.8" stroke="#222" stroke-width="0.8"/>
<path d="M20.2 599.5h4l-2 2.2z" fill="#222"/><path d="M47.3 599.5h4l-2 2.2z" fill="#222"/>
<path d="M35.3 593.3l5.8 6h-3.2v5.6h-5.2v-5.6h-3.2z" fill="#1f62d0" stroke="#1040a0" stroke-width="0.5"/>
<path d="M57.800 599.300l1.300-0.700 1.700 2.200v-6.300q1-1 1.900 0v-1.100q1-1 2 0v1.300q1-0.900 1.900 0v1.500q0.900-0.700 1.700 0.200v5.200q0 3.200-3.200 4h-2.600q-1.800-0.600-2.900-2.800z" fill="#fdfdfd" stroke="#9a9da6" stroke-width="0.700"/><path d="M62.700 594.500v3.500M64.700 594.700v3.300M66.600 596v2.300" stroke="#b4b7be" stroke-width="0.500"/>
<text x="79.600" y="598.400" font-size="6.800" font-weight="bold" fill="#d8305a" transform="rotate(-18 82 596)">A</text><text x="82.600" y="602" font-size="7.200" font-weight="bold" fill="#3a2a6a" transform="rotate(-12 85 599)">B</text><text x="86" y="605.200" font-size="6.800" font-weight="bold" fill="#3a5ac8" transform="rotate(-8 88 603)">C</text>
<path d="M99 600l9.500-6 .6 2.600-4 3.400 2.500 1.500-1 2.500-3.500-1.800-2 2.300-1.500-1.500z" fill="#222a3a"/><path d="M99.500 605.300h5" stroke="#222a3a" stroke-width="1"/><circle cx="107" cy="594.800" r="1.500" fill="#3a5aa8"/>
<text class="s" x="121.700" y="604.300" font-size="15" font-weight="bold" text-anchor="middle" fill="#1a1a8a">T</text>
<path d="M139.500 595.500h11" stroke="#1f6f7a" stroke-width="1.300"/><path d="M139.500 594.500v2.200M150.500 594.500v2.200" stroke="#1f6f7a" stroke-width="0.700"/><text x="140.300" y="603" font-size="7" font-weight="bold" fill="#2f9a4a" textLength="9.400" lengthAdjust="spacingAndGlyphs">50</text>
<path d="M158.700 595.500h9.500" stroke="#b4b6bc" stroke-width="1.300"/><rect x="159.500" y="598.500" width="3" height="4" fill="#a9abb2"/><rect x="164.500" y="598.500" width="3" height="4" fill="#a9abb2"/>
<text x="180.200" y="598.700" font-size="6.400" font-weight="bold" fill="#c8202a" textLength="12.200" lengthAdjust="spacingAndGlyphs">DXF</text><path d="M180.300 599.600h12l-1 1.500h-10zM182 601.900h8.600l-1.200 1.500h-6.200zM184 604.200h4.600l-2.300 1.700z" fill="#d8202a"/>
<path d="M201 593.500h5l2.500 2.500v8.500h-7.500z" fill="#fbfbf4" stroke="#a8a890" stroke-width="0.600"/><circle cx="207.300" cy="602" r="2.700" fill="#4a8a3a" stroke="#2a4a2a" stroke-width="0.800"/><circle cx="207.300" cy="602" r="1" fill="#dfeecf"/>
<path d="M219.500 593.500h4.500l2.500 2.500v8.500h-7z" fill="#fbfbf8" stroke="#b8b8a8" stroke-width="0.600"/><circle cx="224.500" cy="600.500" r="2.200" fill="#f0f4fa" stroke="#9aa0b0" stroke-width="0.700"/><path d="M226 602.300l2.500 2.700" stroke="#c8a05a" stroke-width="1"/>
<circle cx="240.600" cy="598.500" r="5.600" fill="#2a62c8"/><circle cx="239.500" cy="596.500" r="3.200" fill="#5a92e8" opacity="0.700"/><text x="240.600" y="601.800" font-size="8.500" font-weight="bold" text-anchor="middle" fill="#fff">?</text>
<rect x="251" y="591.600" width="109" height="16.200" fill="#fdfdfe" stroke="#c9d3e2" stroke-width="0.600"/>
<text x="305.200" y="602.300" font-size="6.900" text-anchor="middle" fill="#222" xml:space="preserve">X = 3,67;  Y = -10,46</text>
<rect x="363.500" y="592.500" width="0.800" height="14.500" fill="#8fa7c6"/>
<path d="M407.500 599.300l4.500-3.800v2.300h5.200v3h-5.200v2.300z" fill="#4ac0c0" stroke="#1a4a5a" stroke-width="0.700"/>
<rect x="422" y="591.500" width="90" height="16" fill="#fdfdfe" stroke="#c9d3e2" stroke-width="0.600"/>
<text x="466" y="602" font-size="6.900" text-anchor="middle" fill="#222">Comb 1 / 7 * A1-M1</text>
<path d="M526 599.300l-4.500-3.800v2.300h-5.200v3h5.200v2.300z" fill="#4ac0c0" stroke="#1a4a5a" stroke-width="0.700"/>
<path d="M538.500 594q3 5.500 0 11" stroke="#1a3a2a" stroke-width="1.100" fill="none"/><path d="M540.800 594.500q1.200 5-.5 10.500" stroke="#5a9aa8" stroke-width="0.900" fill="none"/><path d="M536.500 605.200h4" stroke="#777" stroke-width="0.700"/>
<rect x="552" y="594.200" width="11.300" height="10.600" fill="#c8a468" stroke="#3a2a1a" stroke-width="0.900"/><rect x="552" y="594.200" width="11.300" height="2.600" fill="#3a2a2a"/><path d="M552 599.500h11.300M552 602.200h11.300" stroke="#5a4020" stroke-width="0.600"/>
</svg></body></html>
